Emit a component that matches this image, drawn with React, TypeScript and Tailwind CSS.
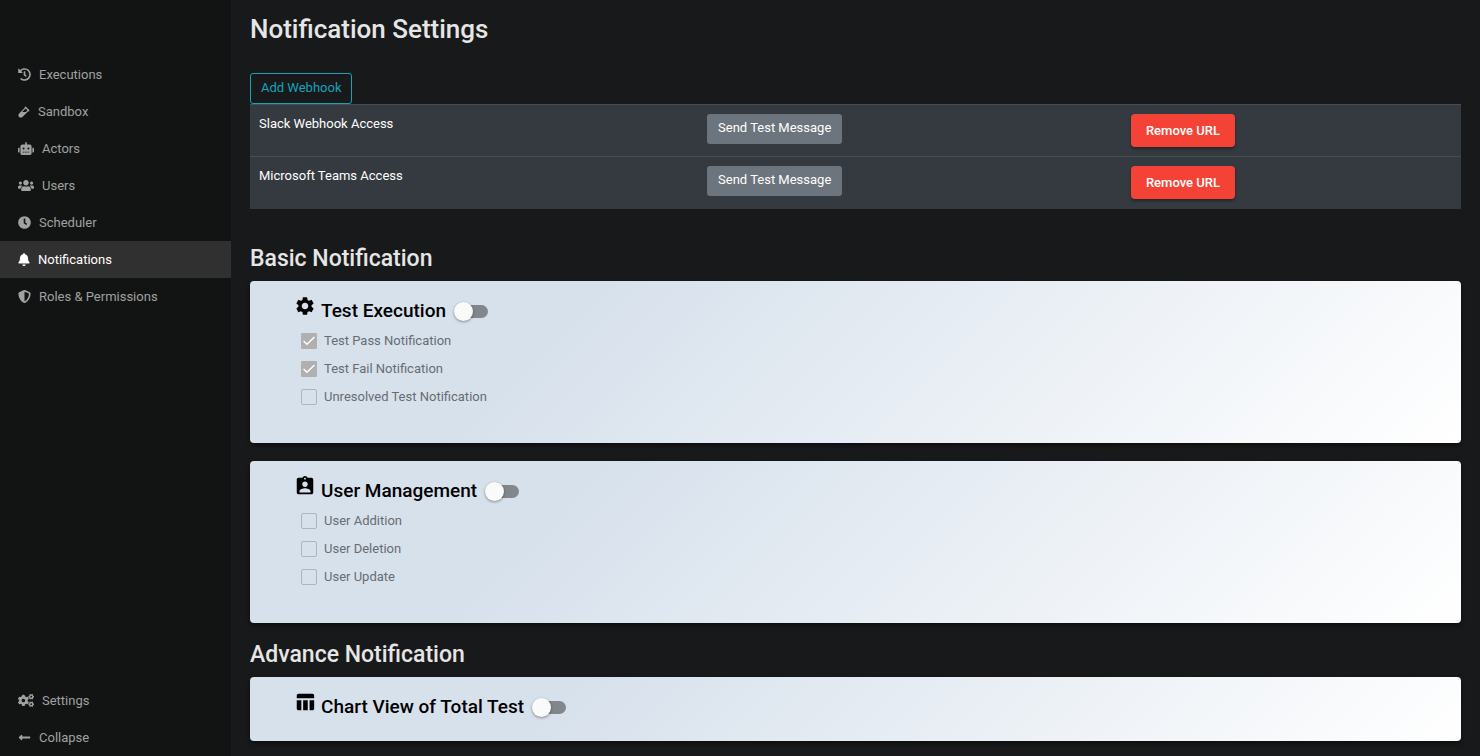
import type { ReactNode } from "react";
import type { IconType } from "react-icons";
import {
  FaBell,
  FaClock,
  FaCogs,
  FaHistory,
  FaLongArrowAltLeft,
  FaRobot,
  FaShieldAlt,
  FaUsers,
  FaVial,
} from "react-icons/fa";
import { MdAssignmentInd, MdSettings, MdTableChart } from "react-icons/md";

type NavEntry = { label: string; icon: IconType; box: string; active?: boolean };

const primaryNav: NavEntry[] = [
  { label: "Executions", icon: FaHistory, box: "h-[13px] w-[13px]" },
  { label: "Sandbox", icon: FaVial, box: "h-3 w-3" },
  { label: "Actors", icon: FaRobot, box: "h-[13px] w-4" },
  { label: "Users", icon: FaUsers, box: "h-[13px] w-4" },
  { label: "Scheduler", icon: FaClock, box: "h-[13px] w-[13px]" },
  { label: "Notifications", icon: FaBell, box: "h-[13px] w-3", active: true },
  { label: "Roles & Permissions", icon: FaShieldAlt, box: "h-[13px] w-[13px]" },
];

const footerNav: NavEntry[] = [
  { label: "Settings", icon: FaCogs, box: "h-[13px] w-4" },
  { label: "Collapse", icon: FaLongArrowAltLeft, box: "h-[13px] w-[13px]" },
];

const webhooks = ["Slack Webhook Access", "Microsoft Teams Access"];

function NavList({ items }: { items: NavEntry[] }) {
  return (
    <ul>
      {items.map(({ label, icon: Icon, box, active }) => (
        <li key={label}>
          <a
            href="#"
            className={`flex h-[37px] items-center gap-2 pl-[18px] text-[13px] ${
              active ? "bg-[#303030] text-white" : "text-[#a0a1a1]"
            }`}
          >
            <Icon className={`${box} shrink-0`} />
            {label}
          </a>
        </li>
      ))}
    </ul>
  );
}

function Toggle({ label }: { label: string }) {
  return (
    <input
      type="checkbox"
      role="switch"
      aria-label={label}
      className="relative ml-[11px] h-[13px] w-[31px] appearance-none rounded-full bg-[#82878e] before:absolute before:-top-[3px] before:-left-[3px] before:h-[19px] before:w-[19px] before:rounded-full before:bg-[#fafafa] before:shadow-[0_1px_3px_rgba(0,0,0,0.4)]"
    />
  );
}

function Option({ label, checked = false }: { label: string; checked?: boolean }) {
  return (
    <label className="flex h-7 items-center gap-[7px] text-[13px] text-[#676c73]">
      <span className="grid h-4 w-4 place-items-center">
        <input
          type="checkbox"
          disabled
          defaultChecked={checked}
          className="col-start-1 row-start-1 h-4 w-4 appearance-none rounded-[2px] border border-[#b1b4b8] checked:rounded-[1px] checked:border-[#b0b0b0] checked:bg-[#b0b0b0]"
        />
        {checked && (
          <svg viewBox="0 0 15 15" className="z-10 col-start-1 row-start-1 h-4 w-4" fill="none" stroke="#fff" strokeWidth="1.3">
            <path d="M2.4 7.6 5.6 10.6 12.6 3.8" />
          </svg>
        )}
      </span>
      {label}
    </label>
  );
}

function Card({ title, icon: Icon, children }: { title: string; icon: IconType; children?: ReactNode }) {
  return (
    <section className="rounded-[4px] bg-[linear-gradient(315deg,#ffffff_0%,#d7e1ec_74%)] pt-[15px] pl-11 shadow-[0_2px_4px_rgba(0,0,0,0.5)]">
      <div className="flex h-[31px] items-center">
        <Icon className="mb-[10px] h-[22px] w-[22px] text-black" />
        <h3 className="ml-[5px] text-[19px] font-medium text-black">{title}</h3>
        <Toggle label={title} />
      </div>
      {children ? <div className="pb-8 pl-[7px]">{children}</div> : <div className="h-[18px]" />}
    </section>
  );
}

export default function App() {
  return (
    <div className="flex min-h-screen bg-[#18191a] font-[Roboto,sans-serif]">
      <nav className="flex w-[231px] shrink-0 flex-col justify-between bg-[#121413] pt-14">
        <NavList items={primaryNav} />
        <NavList items={footerNav} />
      </nav>

      <main className="min-w-0 flex-1 px-[19px] pb-[15px]">
        <h1 className="pt-[13px] text-[26px] leading-8 font-medium text-[#e6e6e6]">Notification Settings</h1>

        <button className="mt-7 block h-[31px] rounded-[3px] border border-[#17a2b8] px-[10px] pb-[2px] text-[13px] text-[#17a2b8]">
          Add Webhook
        </button>

        <table className="w-full table-fixed border-collapse bg-[#343a40] text-[13px] text-white">
          <colgroup>
            <col className="w-[37%]" />
            <col className="w-[35%]" />
            <col />
          </colgroup>
          <tbody>
            {webhooks.map((name) => (
              <tr key={name} className="h-[52px] border-t border-[#454d55] align-top">
                <td className="px-[9px] py-[9px]">{name}</td>
                <td className="px-[9px] py-[9px]">
                  <button className="block h-[30px] rounded-[3px] bg-[#6c757d] px-[11px] pb-[2px]">
                    Send Test Message
                  </button>
                </td>
                <td className="px-[9px] py-[9px]">
                  <button className="block h-[33px] rounded-[4px] bg-[#f44336] px-[15px] font-medium shadow-[0_2px_3px_rgba(0,0,0,0.35)]">
                    Remove URL
                  </button>
                </td>
              </tr>
            ))}
          </tbody>
        </table>

        <h2 className="mt-9 mb-2 text-[23px] leading-7 font-medium text-[#e6e6e6]">Basic Notification</h2>
        <div className="flex flex-col gap-[18px]">
          <Card title="Test Execution" icon={MdSettings}>
            <Option label="Test Pass Notification" checked />
            <Option label="Test Fail Notification" checked />
            <Option label="Unresolved Test Notification" />
          </Card>
          <Card title="User Management" icon={MdAssignmentInd}>
            <Option label="User Addition" />
            <Option label="User Deletion" />
            <Option label="User Update" />
          </Card>
        </div>

        <h2 className="mt-[18px] mb-2 text-[23px] leading-7 font-medium text-[#e6e6e6]">Advance Notification</h2>
        <Card title="Chart View of Total Test" icon={MdTableChart} />
      </main>
    </div>
  );
}
